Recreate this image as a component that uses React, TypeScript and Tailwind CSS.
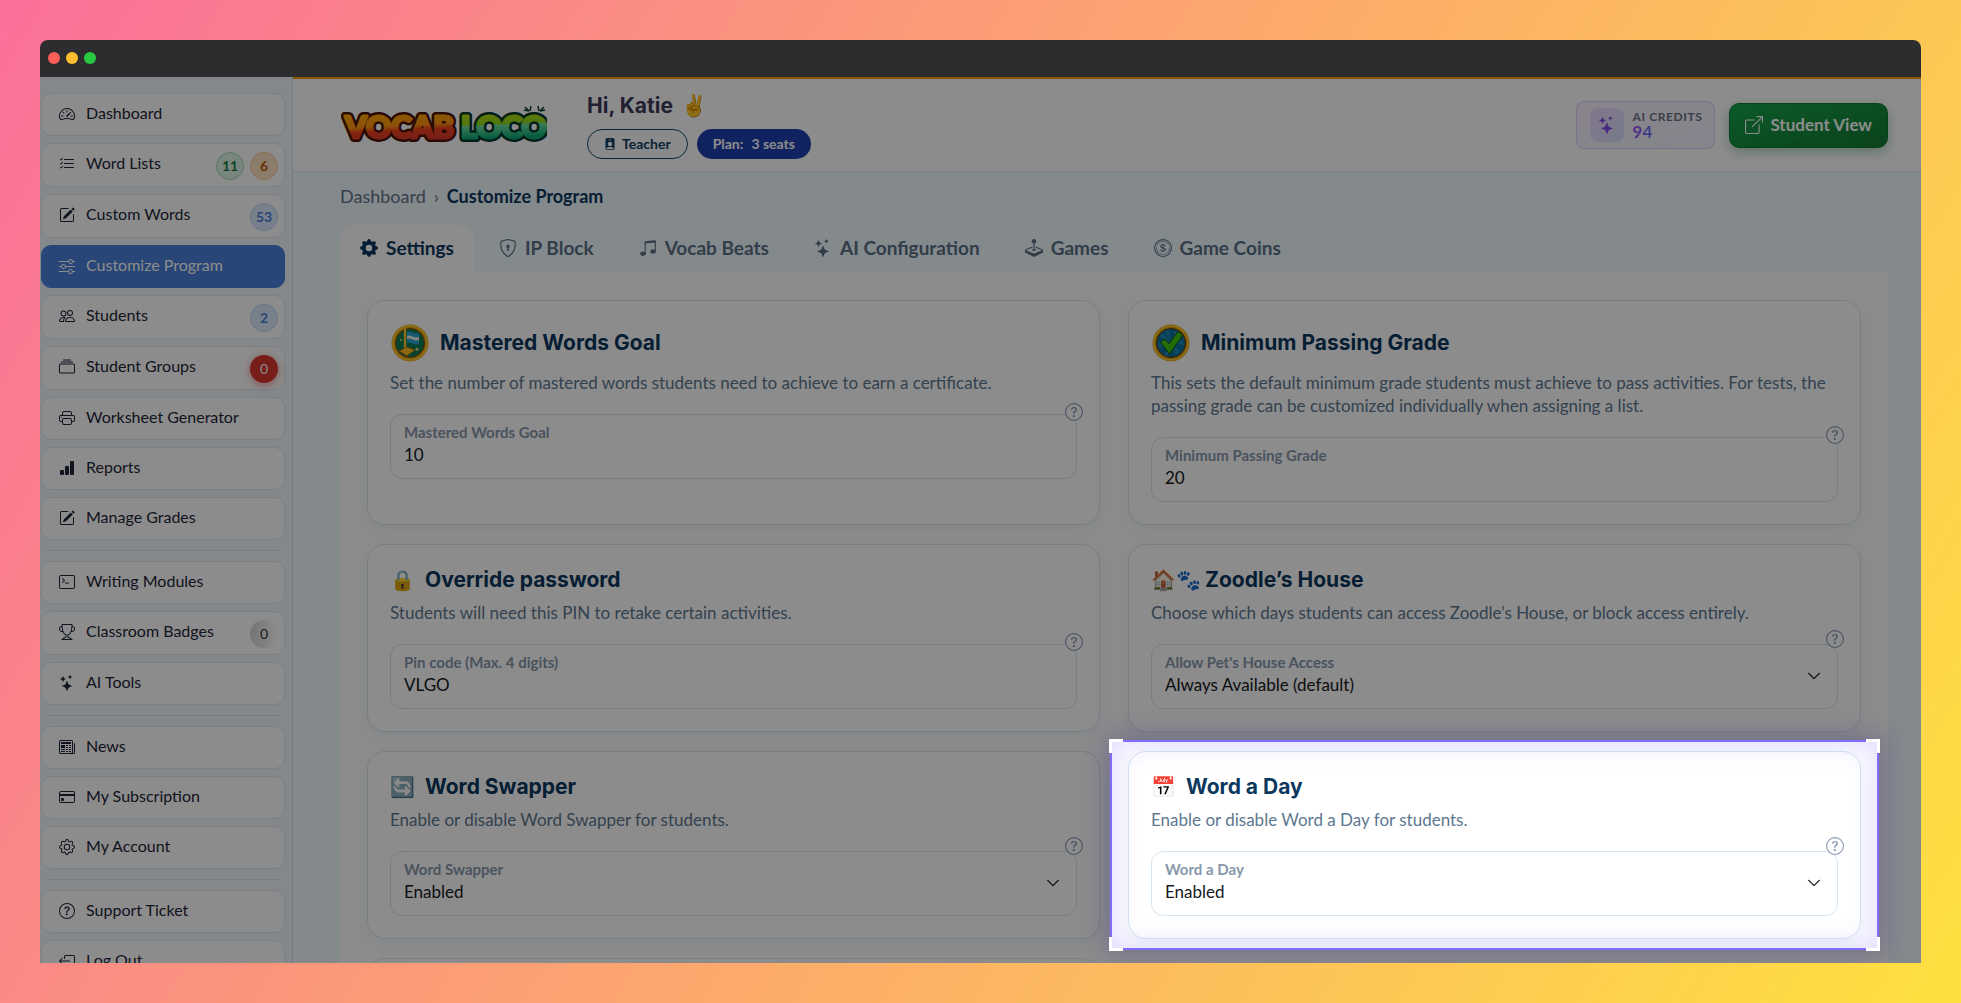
import { ReactNode } from "react";
import { IconType } from "react-icons";
import {
  BsBarChartFill,
  BsBoxArrowLeft,
  BsBoxArrowUpRight,
  BsChevronDown,
  BsCoin,
  BsCollection,
  BsCreditCard,
  BsGear,
  BsGearFill,
  BsJoystick,
  BsListCheck,
  BsMusicNoteBeamed,
  BsNewspaper,
  BsPencilSquare,
  BsPeople,
  BsPersonBadgeFill,
  BsPrinter,
  BsQuestionCircle,
  BsShieldLock,
  BsSliders,
  BsSpeedometer2,
  BsStars,
  BsTerminal,
  BsTrophy
} from "react-icons/bs";

type Badge = { text: string; tone: string };
type NavItem = { label: string; icon: IconType; badges?: Badge[]; active?: boolean };

const GREEN = "border border-[#a3d9b8] bg-[#dcf5e6] text-[#15803d]";
const ORANGE = "border border-[#fbc58d] bg-[#ffe3c4] text-[#c2570c]";
const BLUE = "border border-[#b5d4f0] bg-[#dbeafe] text-[#4a7fd8]";
const RED = "bg-[#dc3530] font-normal text-white shadow-[0_2px_10px_rgba(220,53,48,0.5)]";
const GRAY = "bg-linear-to-r from-[#d4d4d4] to-white font-normal text-[#333]";

const navGroups: NavItem[][] = [
  [
    { label: "Dashboard", icon: BsSpeedometer2 },
    {
      label: "Word Lists",
      icon: BsListCheck,
      badges: [
        { text: "11", tone: GREEN },
        { text: "6", tone: ORANGE }
      ]
    },
    { label: "Custom Words", icon: BsPencilSquare, badges: [{ text: "53", tone: BLUE }] },
    { label: "Customize Program", icon: BsSliders, active: true },
    { label: "Students", icon: BsPeople, badges: [{ text: "2", tone: BLUE }] },
    { label: "Student Groups", icon: BsCollection, badges: [{ text: "0", tone: RED }] },
    { label: "Worksheet Generator", icon: BsPrinter },
    { label: "Reports", icon: BsBarChartFill },
    { label: "Manage Grades", icon: BsPencilSquare }
  ],
  [
    { label: "Writing Modules", icon: BsTerminal },
    { label: "Classroom Badges", icon: BsTrophy, badges: [{ text: "0", tone: GRAY }] },
    { label: "AI Tools", icon: BsStars }
  ],
  [
    { label: "News", icon: BsNewspaper },
    { label: "My Subscription", icon: BsCreditCard },
    { label: "My Account", icon: BsGear }
  ],
  [
    { label: "Support Ticket", icon: BsQuestionCircle },
    { label: "Log Out", icon: BsBoxArrowLeft }
  ]
];

const tabs: { label: string; icon: IconType }[] = [
  { label: "Settings", icon: BsGearFill },
  { label: "IP Block", icon: BsShieldLock },
  { label: "Vocab Beats", icon: BsMusicNoteBeamed },
  { label: "AI Configuration", icon: BsStars },
  { label: "Games", icon: BsJoystick },
  { label: "Game Coins", icon: BsCoin }
];

const Logo = () => (
  <svg width="206" height="38" viewBox="0 0 206 38" role="img" aria-label="Vocab Loco">
    <defs>
      <linearGradient id="vocab" x1="0" y1="0" x2="0.15" y2="1">
        <stop offset="0.2" stopColor="#ffa800" />
        <stop offset="0.55" stopColor="#ff9410" />
        <stop offset="0.68" stopColor="#f0401c" />
        <stop offset="0.9" stopColor="#d93a2b" />
      </linearGradient>
      <linearGradient id="loco" x1="0" y1="0" x2="0.1" y2="1">
        <stop offset="0.2" stopColor="#b6e00c" />
        <stop offset="0.48" stopColor="#8fd81c" />
        <stop offset="0.52" stopColor="#6fe0a0" />
        <stop offset="0.85" stopColor="#0aa876" />
      </linearGradient>
    </defs>
    <g
      fontFamily="Lato, sans-serif"
      fontWeight="900"
      fontSize="31"
      strokeLinejoin="round"
    >
      <g strokeWidth="8" paintOrder="stroke">
        <text x="4" y="32" fill="#4a1206" stroke="#4a1206">
          VOCAB
        </text>
        <text x="120" y="32" fill="#04352c" stroke="#04352c">
          LOCO
        </text>
      </g>
      <g strokeWidth="3" aria-hidden="true">
        <text x="4" y="32" fill="url(#vocab)" stroke="url(#vocab)">
          VOCAB
        </text>
        <text x="120" y="32" fill="url(#loco)" stroke="url(#loco)">
          LOCO
        </text>
      </g>
    </g>
    <path
      d="M184 1l4 4M183 4l5 1M190 0l-1 5M203 1l-4 4M204 4l-5 1M197 0l1 5"
      stroke="#04352c"
      strokeWidth="1.4"
      fill="none"
    />
  </svg>
);

const FlagMedal = () => (
  <svg width="40" height="40" viewBox="0 0 40 40" aria-hidden="true">
    <circle cx="20" cy="20" r="18.5" fill="#e8a010" />
    <circle cx="20" cy="20" r="17" fill="none" stroke="#ffcf33" strokeWidth="1.5" />
    <circle cx="20" cy="20" r="14.5" fill="#0d7a55" stroke="#8a4b00" />
    <path d="M15 6v22" stroke="#ffc72e" strokeWidth="2.4" strokeLinecap="round" />
    <path d="M17 9c4-2 6 3 12 1v11c-5 2-8-3-12-1z" fill="#2aa5d8" />
    <path d="M17 13c4-2 6 3 12 1v3c-5 2-8-3-12-1z" fill="#f2f5ea" />
    <path d="M9 28l8-4 8 3-8 6z" fill="#ffbe1c" stroke="#a35b00" strokeWidth="0.8" />
    <path d="M27 24l.7 1.6 1.6.7-1.6.7-.7 1.6-.7-1.6-1.6-.7 1.6-.7z" fill="#ffe36b" />
    <circle cx="11" cy="17" r="0.9" fill="#ffe36b" />
  </svg>
);

const CheckMedal = () => (
  <svg width="40" height="40" viewBox="0 0 40 40" aria-hidden="true">
    <circle cx="20" cy="20" r="18.5" fill="#e0980c" />
    <circle cx="20" cy="20" r="17" fill="none" stroke="#ffcf33" strokeWidth="1.5" />
    <circle cx="20" cy="20" r="14.5" fill="#0c6f9e" stroke="#5c3a00" />
    <path
      d="M20 20L14 7.500h4zM20 20l4-12.500 4 2zM20 20l12-3v5zM20 20l9 9-4 3zM20 20l-3 13h-4zM20 20L8 25l-1-5zM20 20L8.500 14l3-4z"
      fill="#1f88b5"
    />
    <path
      d="M9.500 19.500l4-3.500 4.500 4.500 9-12 5 3.500L18.500 31z"
      fill="#3fc60f"
      stroke="#0a4f10"
      strokeWidth="1"
      strokeLinejoin="round"
    />
  </svg>
);

const NavLink = ({ item }: { item: NavItem }) => {
  const Icon = item.icon;
  return (
    <a
      href="#"
      className={`flex items-center rounded-[10px] border pb-0.5 pl-[17px] pr-1.5 ${
        item.badges ? "h-11" : "h-[43px]"
      } ${
        item.active
          ? "border-[#4a80d9] bg-[#4a80d9] text-white"
          : "border-[#dde9f5] bg-white text-[#1e2538]"
      }`}
    >
      <Icon className="mr-[11px] size-4 shrink-0" />
      <span className="grow whitespace-nowrap pb-0.5 text-[16px]">{item.label}</span>
      <span className="mt-1 flex gap-1.5">
        {item.badges?.map(badge => (
          <span
            key={badge.text}
            className={`flex size-7 items-center justify-center rounded-full text-sm font-bold ${badge.tone}`}
          >
            {badge.text}
          </span>
        ))}
      </span>
    </a>
  );
};

const Sidebar = () => (
  <aside className="w-[253px] shrink-0 border-r border-[#d3e3ef] bg-[#f0f8fe] pl-px pr-[7px] pt-4">
    <nav>
      {navGroups.map((group, i) => (
        <div key={i}>
          {i > 0 && <hr className="mx-1.5 my-2.5 border-[#d5e3ee]" />}
          <div className="flex flex-col gap-[7px]">
            {group.map(item => (
              <NavLink key={item.label} item={item} />
            ))}
          </div>
        </div>
      ))}
    </nav>
  </aside>
);

const Header = () => (
  <header className="flex items-center border-b border-[#e6ebf0] border-t-2 border-t-[#ff9d00] bg-white pb-3 pl-12 pr-[33px] pt-3">
    <Logo />
    <div className="ml-10 grow">
      <h1 className="flex items-center gap-2 font-[Inter,sans-serif] text-[21px] font-bold leading-[30px] text-[#3c3a5c]">
        Hi, Katie <span>✌️</span>
      </h1>
      <div className="mt-2 flex gap-[9px]">
        <span className="flex h-[30px] items-center gap-1.5 rounded-full border border-[#0c4a6e] bg-[#f8fbfe] px-4 text-sm font-bold text-[#0f3d5f]">
          <BsPersonBadgeFill className="size-3" />
          Teacher
        </span>
        <span className="flex h-[30px] items-center gap-2 rounded-full bg-[#1e40af] px-4 text-sm font-bold text-white">
          <span>Plan:</span>
          <span>3 seats</span>
        </span>
      </div>
    </div>
    <div className="mr-3.5 flex items-center gap-[9px] rounded-lg border border-[#e4ccfb] bg-linear-to-br from-[#f9f1fe] to-[#eff4ff] py-1.5 pl-[13px] pr-3">
      <span className="flex size-[34px] items-center justify-center rounded-lg bg-linear-to-br from-[#ecd9fc] to-[#d6e0fc]">
        <BsStars className="size-[18px] text-[#8650e8]" />
      </span>
      <span className="flex flex-col">
        <span className="text-xs font-bold leading-[14px] tracking-wider text-[#6b7280]">
          AI CREDITS
        </span>
        <span className="self-start bg-linear-to-r from-[#a544f0] to-[#5577f2] bg-clip-text text-[17px] font-bold leading-4 text-transparent">
          94
        </span>
      </span>
    </div>
    <button className="flex h-[45px] items-center gap-[7px] rounded-[10px] border border-[#0b7a36] bg-linear-to-br from-[#16a34a] to-[#147a35] px-[15px] text-[17px] font-bold text-white shadow-[0_4px_12px_rgba(22,130,60,0.35)]">
      <BsBoxArrowUpRight className="size-[18px]" />
      Student View
    </button>
  </header>
);

type FieldProps = { id: string; label: string; value: string; select?: boolean };

const Field = ({ id, label, value, select }: FieldProps) => (
  <div className="relative mt-5 rounded-xl border border-[#d6e6f3] bg-white pb-[11px] pt-2">
    <label
      htmlFor={id}
      className="mb-0.5 block px-[13px] text-[15px] font-bold leading-[18px] text-[#8798ab]"
    >
      {label}
    </label>
    {select ? (
      <>
        <select
          id={id}
          defaultValue={value}
          className="block h-6 w-full appearance-none bg-transparent px-[13px] text-[17px] leading-6 text-[#15181c]"
        >
          <option>{value}</option>
        </select>
        <BsChevronDown className="pointer-events-none absolute right-4 top-6 size-3.5 stroke-[0.6] text-[#22262b]" />
      </>
    ) : (
      <input
        id={id}
        type="text"
        defaultValue={value}
        className="block h-6 w-full bg-transparent px-[13px] text-[17px] leading-6 text-[#15181c]"
      />
    )}
    <button
      aria-label={`About ${label}`}
      className={`absolute -right-[7px] rounded-full bg-white text-[#8a9ab5] ${
        select ? "-top-[15px]" : "-top-3"
      }`}
    >
      <BsQuestionCircle className="size-[18px]" />
    </button>
  </div>
);

// Dims everything around the card it is placed in
const Spotlight = () => (
  <div className="pointer-events-none absolute -inset-x-[19px] -inset-y-3 z-10 border-2 border-[#7f6dff] shadow-[0_0_0_3000px_rgba(0,0,0,0.45),0_0_24px_4px_rgba(127,109,255,0.35),inset_0_0_24px_4px_rgba(127,109,255,0.22)]">
    <span className="absolute -left-[3px] -top-[3px] size-3.5 border-l-[3px] border-t-[3px] border-white" />
    <span className="absolute -right-[3px] -top-[3px] size-3.5 border-r-[3px] border-t-[3px] border-white" />
    <span className="absolute -bottom-[3px] -left-[3px] size-3.5 border-b-[3px] border-l-[3px] border-white" />
    <span className="absolute -bottom-[3px] -right-[3px] size-3.5 border-b-[3px] border-r-[3px] border-white" />
  </div>
);

type CardProps = {
  icon: ReactNode;
  title: string;
  text: string;
  field: FieldProps;
  medal?: boolean;
  tight?: boolean;
  spotlight?: boolean;
};

const Card = ({ icon, title, text, field, medal, tight, spotlight }: CardProps) => (
  <section className="relative rounded-[18px] border border-[#d6e6f3] bg-white p-[22px] shadow-[0_4px_16px_rgba(12,74,110,0.07)]">
    <h2
      className={`mb-2 flex items-center font-[Inter,sans-serif] text-[21px] font-bold text-[#0c385e] ${
        medal ? "h-10" : "h-[26px]"
      } ${tight ? "gap-1" : "gap-2.5"}`}
    >
      {medal ? icon : <span className="text-[20px]">{icon}</span>}
      {title}
    </h2>
    <p className="text-[17px] leading-[23px] text-[#5d7890]">{text}</p>
    <Field {...field} />
    {spotlight && <Spotlight />}
  </section>
);

const cards: CardProps[] = [
  {
    icon: <FlagMedal />,
    title: "Mastered Words Goal",
    text: "Set the number of mastered words students need to achieve to earn a certificate.",
    field: { id: "goal", label: "Mastered Words Goal", value: "10" },
    medal: true
  },
  {
    icon: <CheckMedal />,
    title: "Minimum Passing Grade",
    text:
      "This sets the default minimum grade students must achieve to pass activities. For tests, the passing grade can be customized individually when assigning a list.",
    field: { id: "grade", label: "Minimum Passing Grade", value: "20" },
    medal: true
  },
  {
    icon: "🔒",
    title: "Override password",
    text: "Students will need this PIN to retake certain activities.",
    field: { id: "pin", label: "Pin code (Max. 4 digits)", value: "VLGO" }
  },
  {
    icon: "🏠🐾",
    title: "Zoodle’s House",
    text: "Choose which days students can access Zoodle’s House, or block access entirely.",
    field: {
      id: "house",
      label: "Allow Pet's House Access",
      value: "Always Available (default)",
      select: true
    },
    tight: true
  },
  {
    icon: "🔄",
    title: "Word Swapper",
    text: "Enable or disable Word Swapper for students.",
    field: { id: "swapper", label: "Word Swapper", value: "Enabled", select: true }
  },
  {
    icon: "📅",
    title: "Word a Day",
    text: "Enable or disable Word a Day for students.",
    field: { id: "word-a-day", label: "Word a Day", value: "Enabled", select: true },
    spotlight: true
  }
];

const Main = () => (
  <main className="pl-[47px] pr-[33px] pt-[11px]">
    <div className="flex items-center text-[18px] leading-[26px]">
      <a href="#" className="text-[#64748b]">
        Dashboard
      </a>
      <span className="mx-2 text-[#64748b]">›</span>
      <span className="font-bold text-[#0c385e]">Customize Program</span>
    </div>
    <div role="tablist" className="mt-4 flex gap-[5px]">
      {tabs.map(({ label, icon: Icon }, i) => (
        <button
          key={label}
          role="tab"
          aria-selected={i === 0}
          className={`flex h-12 items-center gap-2 whitespace-nowrap rounded-t-[14px] px-5 pb-0.5 text-[19px] font-bold ${
            i === 0 ? "bg-white text-[#0c385e]" : "text-[#5a7186]"
          }`}
        >
          <Icon className="size-[18px]" />
          {label}
        </button>
      ))}
    </div>
    <div className="grid grid-cols-2 gap-x-7 gap-y-[19px] bg-white p-[27px]">
      {cards.map(card => (
        <Card key={card.title} {...card} />
      ))}
      <section className="h-44 rounded-[18px] border border-[#d6e6f3] bg-white" />
    </div>
  </main>
);

const App = () => (
  <div className="flex h-screen flex-col bg-[linear-gradient(120deg,#fa709a_0%,#fee140_100%)] p-10 font-[Lato,sans-serif]">
    <div className="flex h-[37px] shrink-0 items-center gap-1.5 rounded-t-lg bg-[#2d2d2f] pb-px pl-2">
      <span className="size-3 rounded-full bg-[#ff5f57]" />
      <span className="size-3 rounded-full bg-[#febc2e]" />
      <span className="size-3 rounded-full bg-[#28c840]" />
    </div>
    <div className="relative flex min-h-0 grow overflow-hidden bg-[#f0f9ff]">
      <Sidebar />
      <div className="min-w-0 grow">
        <Header />
        <Main />
      </div>
    </div>
  </div>
);

export default App;
